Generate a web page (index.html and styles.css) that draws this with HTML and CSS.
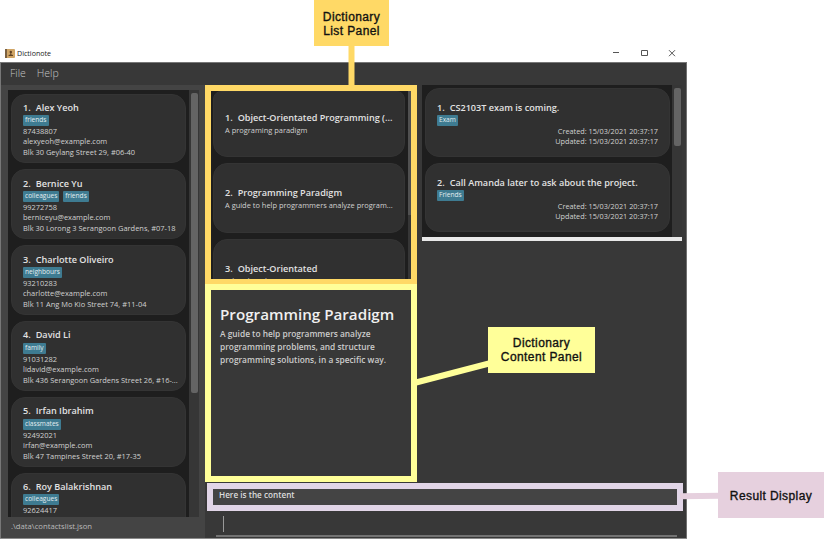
FILE: index.html
```html
<!DOCTYPE html>
<html lang="en">
<head>
<meta charset="utf-8">
<title>Dictionote</title>
<link rel="stylesheet" href="styles.css">
</head>
<body>
<div class="stage">
  <main class="window">
    <header class="titlebar">
      <svg class="app-icon" width="10" height="9" viewBox="0 0 10 9"><rect width="10" height="9" rx="1" fill="#d0a566"/><rect width="2" height="9" fill="#7a6040"/><circle cx="5.8" cy="3" r="1.2" fill="#5f4224"/><path d="M5.3 3h1v2.500l1.700.6V7H3.600v-.9l1.700-.6z" fill="#5f4224"/></svg>
      <span class="app-name">Dictionote</span>
      <svg class="controls" width="66" height="10" viewBox="0 0 66 10" fill="none" stroke="#555" stroke-width="1"><path d="M1 4.500h6M29.500 2.500h6v5h-6zM57 2.200l6 6M63 2.200l-6 6"/></svg>
    </header>
    <nav class="menubar"><span>File</span><span>Help</span></nav>
    <div class="body">
      <aside class="contacts">
        <div class="scroll-area">
          <div class="list">
            <article class="card"><h2><b>1.</b>Alex Yeoh</h2><div class="tags"><i>friends</i></div><p>87438807</p><p>alexyeoh@example.com</p><p>Blk 30 Geylang Street 29, #06-40</p></article>
            <article class="card"><h2><b>2.</b>Bernice Yu</h2><div class="tags"><i>colleagues</i><i>friends</i></div><p>99272758</p><p>berniceyu@example.com</p><p>Blk 30 Lorong 3 Serangoon Gardens, #07-18</p></article>
            <article class="card"><h2><b>3.</b>Charlotte Oliveiro</h2><div class="tags"><i>neighbours</i></div><p>93210283</p><p>charlotte@example.com</p><p>Blk 11 Ang Mo Kio Street 74, #11-04</p></article>
            <article class="card"><h2><b>4.</b>David Li</h2><div class="tags"><i>family</i></div><p>91031282</p><p>lidavid@example.com</p><p>Blk 436 Serangoon Gardens Street 26, #16-...</p></article>
            <article class="card"><h2><b>5.</b>Irfan Ibrahim</h2><div class="tags"><i>classmates</i></div><p>92492021</p><p>irfan@example.com</p><p>Blk 47 Tampines Street 20, #17-35</p></article>
            <article class="card"><h2><b>6.</b>Roy Balakrishnan</h2><div class="tags"><i>colleagues</i></div><p>92624417</p></article>
          </div>
          <div class="scrollbar"><div class="thumb thumb-contacts"></div></div>
        </div>
        <footer class="path">.\data\contactslist.json</footer>
      </aside>
      <section class="workspace">
        <div class="panes">
          <section class="dictionary">
            <div class="frame frame-list">
              <div class="list dict-list">
                <article class="card"><h2><b>1.</b>Object-Orientated Programming (...</h2><p>A programing paradigm</p></article>
                <article class="card"><h2><b>2.</b>Programming Paradigm</h2><p class="guide">A guide to help programmers analyze program...</p></article>
                <article class="card"><h2><b>3.</b>Object-Orientated</h2><p>related to object</p></article>
              </div>
              <div class="slim-bar"><div class="slim-thumb"></div></div>
            </div>
            <div class="frame frame-content">
              <h1>Programming Paradigm</h1>
              <p>A guide to help programmers analyze<br>programming problems, and structure<br>programming solutions, in a specific way.</p>
            </div>
          </section>
          <section class="notes">
            <div class="scroll-area">
              <div class="list note-list">
                <article class="card"><h2><b>1.</b>CS2103T exam is coming.</h2><div class="tags"><i>Exam</i></div><p>Created: 15/03/2021 20:37:17</p><p>Updated: 15/03/2021 20:37:17</p></article>
                <article class="card"><h2><b>2.</b>Call Amanda later to ask about the project.</h2><div class="tags"><i>Friends</i></div><p>Created: 15/03/2021 20:37:17</p><p>Updated: 15/03/2021 20:37:17</p></article>
              </div>
              <div class="scrollbar"><div class="thumb thumb-notes"></div></div>
            </div>
          </section>
        </div>
        <div class="frame-result">Here is the content</div>
        <div class="command"><span class="caret"></span></div>
      </section>
    </div>
  </main>
  <svg class="connectors" width="825" height="539" viewBox="0 0 825 539" fill="none" stroke-width="6"><path d="M351.500 45v44" stroke="#ffd966"/><path d="M416 382.500l73-19" stroke="#ffff99"/><path d="M680 496.300l40-.5" stroke="#e6d0de"/></svg>
  <div class="callout callout-list">Dictionary<br>List Panel</div>
  <div class="callout callout-content">Dictionary<br>Content Panel</div>
  <div class="callout callout-result">Result Display</div>
</div>
</body>
</html>
```
FILE: styles.css
```css
* { box-sizing: border-box; }
body { margin: 0; background: #fff; font-family: "Open Sans", "Noto Sans", sans-serif; color: #dcdcdc; overflow: hidden; }
h1, h2, p { margin: 0; white-space: nowrap; }
.stage { position: relative; width: 825px; height: 539px; padding-top: 44px; overflow: hidden; }
.window { width: 687px; height: 495px; display: flex; flex-direction: column; background: #383838; border-bottom: 1px solid #8a8a8a; }
.titlebar { height: 18px; flex: none; display: flex; align-items: center; background: #fff; padding: 0 9px 0 5px; }
.app-name { margin-left: 2px; font-size: 7.100px; line-height: 18px; color: #222; }
.controls { margin-left: auto; }
.menubar { height: 23px; flex: none; display: flex; gap: 11px; padding: 1px 0 0 9px; border-top: 1px solid #777; border-left: 1px solid #777; border-right: 1px solid #707070; font-size: 10.500px; line-height: 19px; color: #c4c4c4; font-weight: 300; }
.body { flex: 1; min-height: 0; display: flex; border-left: 1px solid #777; border-right: 1px solid #707070; }
.contacts { width: 204px; flex: none; background: #444; padding: 5px 6px 0 7px; }
.contacts .scroll-area { height: 427px; }
.scroll-area { display: flex; overflow: hidden; }
.list { flex: 1; min-width: 0; background: #1e1e1e; overflow: hidden; display: flex; flex-direction: column; gap: 6.100px; padding: 3.500px 3px 0 3px; }
.card { flex: none; height: 69.800px; border-radius: 14px; background: #303030; border: 1px solid #343434; padding: 6.300px 0 0 11px; }
h2 { font-size: 9.100px; line-height: 13px; font-weight: 600; color: #e2e2e2; }
h2 b { font-weight: 600; margin-right: 5px; }
.card p { font-size: 7.440px; line-height: 10.500px; color: #d0d0d0; }
.tags { display: flex; gap: 4px; height: 12.200px; padding: 1.200px 0 0; }
.tags i { font-style: normal; font-size: 6.600px; line-height: 10px; height: 11px; padding: 0 2px; background: #3e7b91; color: #e3edf0; border-radius: 1px; }
.scrollbar { width: 10px; flex: none; background: #363636; padding: 3px 1px 0 2px; }
.thumb { border-radius: 2px; background: #646464; }
.thumb-contacts { height: 300px; }
.thumb-notes { height: 58px; }
.path { padding-left: 3px; font-size: 7.700px; line-height: 18px; color: #bbb; }
.workspace { flex: 1; min-width: 0; }
.panes { height: 398px; display: flex; }
.dictionary { width: 212px; flex: none; }
.frame { border: 6px solid; }
.frame-list { height: 199px; border-color: #ffd966; border-bottom-width: 5px; display: flex; overflow: hidden; }
.dict-list { padding: 0 3px 0 2px; }
.dict-list .card { padding: 22px 0 0 11px; }
.dict-list .card:first-child { height: 66px; border-radius: 8px 8px 14px 14px; padding-top: 19px; }
.dict-list .card p { padding-top: 1px; }
.slim-bar { width: 3px; background: #363636; }
.slim-thumb { height: 124px; background: #505050; }
.frame-content { height: 198px; border-color: #ffff99; padding: 13px 0 0 9px; }
.frame-content h1 { font-size: 15.200px; line-height: 22px; font-weight: 600; color: #f0f0f0; }
.frame-content p { padding-top: 2px; font-size: 8.350px; line-height: 13px; font-weight: 600; color: #ccc; }
.notes { padding-left: 5px; width: 265px; }
.notes .scroll-area { height: 156px; border-bottom: 4px solid #e8e8e8; }
.note-list { padding: 2.500px 2px 0 3px; }
.note-list .card { padding: 12px 11px 0 11px; height: 69px; }
.note-list .card p { text-align: right; font-size: 7.300px; }
.frame-result { width: 476px; height: 28px; margin-left: 2px; border: 6px solid #e1d5e7; background: #444; padding-left: 6px; font-size: 8.200px; line-height: 12px; font-weight: 600; }
.command { width: 461px; height: 26px; margin: 0 0 0 11px; border-bottom: 2px solid #737373; padding: 5px 0 0 7px; }
.caret { display: block; width: 1px; height: 16px; background: #999; }
.connectors { position: absolute; left: 0; top: 0; }
.callout { position: absolute; display: flex; align-items: center; justify-content: center; text-align: center; font: 12px/14px "Liberation Sans", Arial, sans-serif; letter-spacing: .4px; -webkit-text-stroke: .35px #111; color: #111; }
.callout-list { left: 314px; top: 0; width: 75px; height: 46px; padding-top: 2px; background: #ffd966; }
.callout-content { left: 488px; top: 327px; width: 107px; height: 46px; background: #ffff99; }
.callout-result { left: 718px; top: 472px; width: 106px; height: 46px; padding-top: 1px; background: #e6d0de; }
```
